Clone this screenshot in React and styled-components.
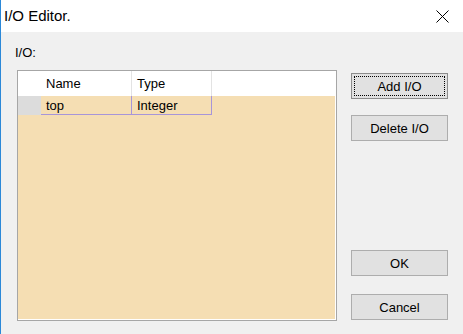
import React from "react";
import styled, { createGlobalStyle } from "styled-components";

const Global = createGlobalStyle`
  html, body { margin: 0; padding: 0; overflow: hidden; background: #f0f0f0; }
  * { box-sizing: border-box; }
`;

const Window = styled.div`
  width: 463px;
  height: 334px;
  display: flex;
  flex-direction: column;
  border-left: 1px solid #2b88d8;
  font-family: "Liberation Sans", Arial, sans-serif;
  color: #000;
  background: #f0f0f0;
`;

const TitleBar = styled.div`
  height: 32px;
  flex: none;
  display: flex;
  align-items: flex-start;
  justify-content: space-between;
  background: #fff;
  padding: 0 14px 0 3px;
`;

const Title = styled.div`
  font-size: 15px;
  line-height: 32px;
`;

const CloseIcon = styled.svg`
  margin-top: 10px;
  display: block;
`;

const Body = styled.div`
  flex: 1;
  display: flex;
  padding: 13px 0 13px 14px;
`;

const LeftCol = styled.div`
  display: flex;
  flex-direction: column;
`;

const Label = styled.div`
  font-size: 13px;
  line-height: 16px;
  margin-bottom: 9px;
`;

const Table = styled.div`
  margin-left: 2px;
  width: 320px;
  height: 251px;
  border: 1px solid #a6a6a6;
  box-shadow: inset -1px -1px 0 #fff;
  background: #f5deb3;
  display: flex;
  flex-direction: column;
  overflow: hidden;
`;

const Row = styled.div`
  display: grid;
  grid-template-columns: 23px 91px 80px 1fr;
  height: ${(p) => p.$h}px;
  background: ${(p) => (p.$header ? "#fff" : "transparent")};
  flex: none;
`;

const HeadCell = styled.div`
  font-size: 13px;
  display: flex;
  align-items: center;
  padding-left: 5px;
  border-right: ${(p) => (p.$sep ? "1px solid #e3e3e3" : "none")};
  margin-right: ${(p) => (p.$sep ? "0" : "0")};
`;

const RowHead = styled.div`
  background: #dcdcdc;
`;

const Cell = styled.div`
  font-size: 13px;
  display: flex;
  align-items: center;
  padding-left: 5px;
  border-right: 1px solid #a795d9;
  border-bottom: 1px solid #a795d9;
`;

const ButtonCol = styled.div`
  display: flex;
  flex-direction: column;
  margin-left: 14px;
  padding: 28px 0 1px;
  width: 97px;
`;

const Button = styled.button`
  position: relative;
  width: 97px;
  height: 26px;
  margin: 0;
  margin-top: ${(p) => p.$mt};
  padding: 0;
  background: #e1e1e1;
  border: 1px solid ${(p) => (p.$focused ? "#8c8c8c" : "#adadad")};
  font-family: "Liberation Sans", Arial, sans-serif;
  font-size: 13px;
  color: #000;
  &::after {
    content: "";
    display: ${(p) => (p.$focused ? "block" : "none")};
    position: absolute;
    inset: 2px;
    border: 1px dotted #000;
  }
`;

export default function App() {
  return (
    <>
      <Global />
      <Window>
        <TitleBar>
          <Title>I/O Editor.</Title>
          <CloseIcon width="13" height="13" viewBox="0 0 13 13">
            <path d="M0.5 0.5 L12.5 12.5 M12.5 0.5 L0.5 12.5" stroke="#000" strokeWidth="1" fill="none" />
          </CloseIcon>
        </TitleBar>
        <Body>
          <LeftCol>
            <Label>I/O:</Label>
            <Table>
              <Row $header $h={25}>
                <div />
                <HeadCell $sep>Name</HeadCell>
                <HeadCell $sep>Type</HeadCell>
                <div />
              </Row>
              <Row $h={19}>
                <RowHead />
                <Cell>top</Cell>
                <Cell>Integer</Cell>
                <div />
              </Row>
            </Table>
          </LeftCol>
          <ButtonCol>
            <Button $focused $mt="0">Add I/O</Button>
            <Button $mt="16px">Delete I/O</Button>
            <Button $mt="auto">OK</Button>
            <Button $mt="18px">Cancel</Button>
          </ButtonCol>
        </Body>
      </Window>
    </>
  );
}
